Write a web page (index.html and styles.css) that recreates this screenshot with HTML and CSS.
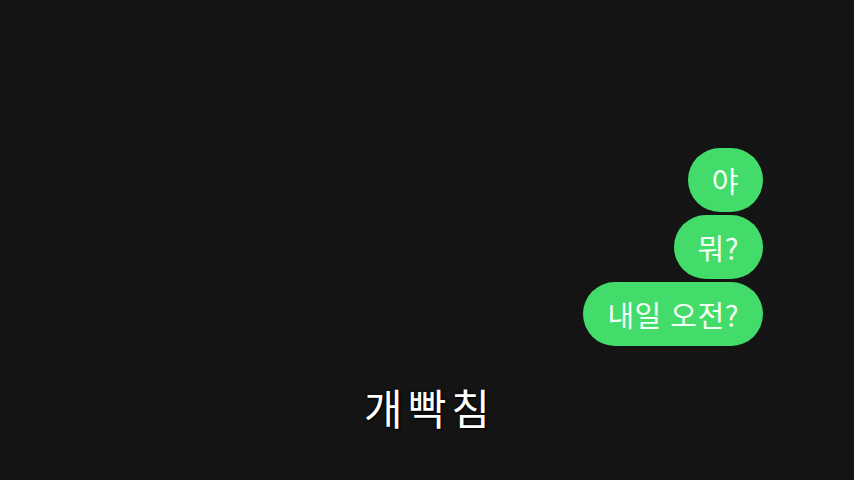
FILE: index.html
```html
<!DOCTYPE html>
<html lang="ko">
<head>
  <meta charset="UTF-8">
  <meta name="viewport" content="width=device-width, initial-scale=1.0">
  <title>개빡침</title>
  <link rel="stylesheet" href="styles.css">
</head>
<body>

<div class="screen">
  <div class="chat">
    <div class="bubble">야</div>
    <div class="bubble">뭐?</div>
    <div class="bubble">내일 오전?</div>
  </div>
  <div class="caption">개빡침</div>
</div>

</body>
</html>
```

FILE: styles.css
```css
html, body {
  margin: 0;
  background-color: #141414;
}
.screen {
  width: 854px;
  height: 480px;
  display: flex;
  flex-direction: column;
  box-sizing: border-box;
  padding-top: 148px;
}
.chat {
  display: flex;
  flex-direction: column;
  align-items: flex-end;
  gap: 3px;
  padding-right: 91px;
}
.bubble {
  height: 64px;
  line-height: 64px;
  padding: 0 24px;
  text-align: center;
  border-radius: 32px;
  background-color: #43dc6b;
  color: #f4fff4;
  font-family: "Noto Sans CJK KR", "Noto Sans", sans-serif;
  font-size: 29px;
  letter-spacing: 0.5px;
}
.caption {
  margin-top: 36px;
  text-align: center;
  color: #ffffff;
  font-family: "Noto Sans CJK KR", sans-serif;
  font-weight: 400;
  font-size: 42px;
  line-height: 50px;
  letter-spacing: 5px;
  padding-left: 5px;
  text-shadow: 0 0 3px #000, 1px 1px 2px #000;
}
```
